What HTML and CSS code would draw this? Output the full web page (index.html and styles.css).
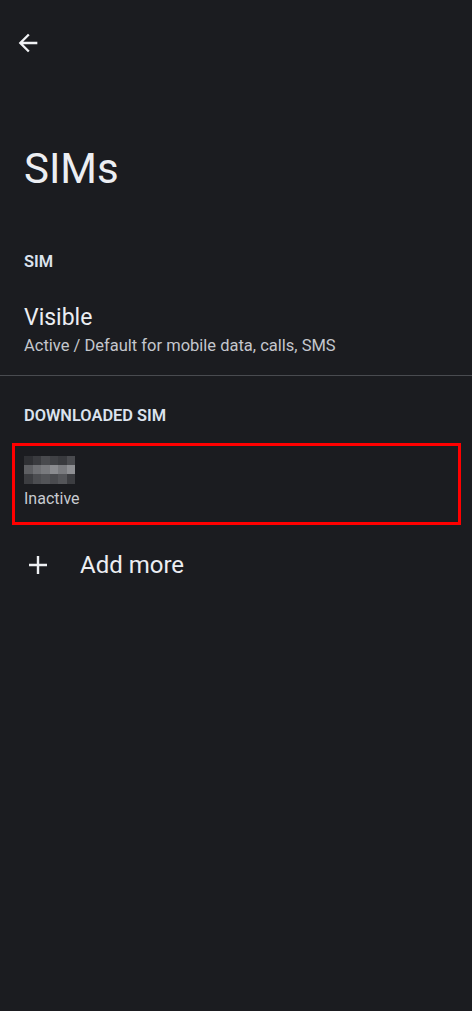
FILE: index.html
```html
<!DOCTYPE html>
<html lang="en">
<head>
<meta charset="utf-8">
<title>SIMs</title>
<link rel="stylesheet" href="styles.css">
</head>
<body>
<div class="screen">
  <header class="topbar">
    <svg class="back" viewBox="0 0 24 24" width="28" height="28" aria-label="Back">
      <path d="M20 11H7.83l5.59-5.59L12 4l-8 8 8 8 1.41-1.41L7.83 13H20v-2z" fill="#f1f2f5"/>
    </svg>
  </header>
  <h1 class="title">SIMs</h1>

  <div class="section-header first">SIM</div>
  <div class="item">
    <div class="item-title">Visible</div>
    <div class="item-sub">Active / Default for mobile data, calls, SMS</div>
  </div>
  <div class="divider"></div>

  <div class="section-header second">DOWNLOADED SIM</div>
  <div class="highlight">
    <div class="pixels">
      <span class="p p1"></span><span class="p p2"></span><span class="p p3"></span><span class="p p4"></span><span class="p p5"></span><span class="p p6"></span>
      <span class="p p7"></span><span class="p p8"></span><span class="p p9"></span><span class="p p10"></span><span class="p p11"></span><span class="p p12"></span>
      <span class="p p13"></span><span class="p p14"></span><span class="p p15"></span><span class="p p16"></span><span class="p p17"></span><span class="p p18"></span>
    </div>
    <div class="inactive">Inactive</div>
  </div>

  <div class="add-row">
    <svg class="plus" viewBox="0 0 20 20" width="20" height="20" aria-hidden="true">
      <path d="M10 1v18M1 10h18" stroke="#eef0f3" stroke-width="2.4" fill="none"/>
    </svg>
    <span class="add-text">Add more</span>
  </div>
</div>
</body>
</html>
```

FILE: styles.css
```css
html, body {
  margin: 0;
  padding: 0;
  background: #1b1c20;
}
body {
  font-family: Roboto, "Noto Sans", "Liberation Sans", sans-serif;
  color: #e8eaee;
  width: 472px;
  height: 1011px;
  overflow: hidden;
}
.screen {
  display: flex;
  flex-direction: column;
}
.topbar {
  height: 86px;
  display: flex;
  align-items: flex-start;
}
.back {
  display: block;
  margin-left: 14px;
  margin-top: 29px;
}
.title {
  margin: 59px 0 0 24px;
  font-size: 42px;
  line-height: 48px;
  font-weight: 400;
  color: #eceef2;
}
.section-header {
  margin-left: 24px;
  font-size: 16.4px;
  line-height: 20px;
  font-weight: 600;
  color: #dce3ee;
}
.section-header.first {
  margin-top: 59px;
}
.section-header.second {
  margin-top: 30px;
}
.item {
  margin: 32px 0 0 24px;
}
.item-title {
  font-size: 23px;
  line-height: 28px;
  color: #eceef2;
}
.item-sub {
  margin-top: 3px;
  font-size: 16.5px;
  line-height: 22px;
  color: #c4c7cd;
}
.divider {
  margin-top: 18px;
  height: 1px;
  background: #494b50;
}
.highlight {
  margin: 17px 0 0 12px;
  width: 434px;
  height: 66px;
  border: 3px solid #ff0000;
  padding: 10px 0 0 9px;
  box-sizing: content-box;
}
.pixels {
  display: grid;
  grid-template-columns: repeat(6, 8.5px);
  grid-template-rows: 9px 9px 10px;
  width: 51px;
}
.p1 { background: #2f3034; }
.p2 { background: #3a3b3f; }
.p3 { background: #494a4e; }
.p4 { background: #404145; }
.p5 { background: #393a3e; }
.p6 { background: #4a4b4f; }
.p7 { background: #5e5f63; }
.p8 { background: #6f7074; }
.p9 { background: #797a7e; }
.p10 { background: #8a8b8f; }
.p11 { background: #7a7b7f; }
.p12 { background: #8e8f93; }
.p13 { background: #3c3d41; }
.p14 { background: #4c4d51; }
.p15 { background: #535458; }
.p16 { background: #4a4b4f; }
.p17 { background: #545559; }
.p18 { background: #3c3d41; }
.inactive {
  margin-top: 5px;
  font-size: 16px;
  line-height: 20px;
  color: #c8cbd0;
}
.add-row {
  margin: 26px 0 0 28px;
  display: flex;
  align-items: center;
  height: 28px;
}
.plus {
  display: block;
  margin-right: 32px;
}
.add-text {
  font-size: 24px;
  line-height: 28px;
  color: #eceef2;
}
```
